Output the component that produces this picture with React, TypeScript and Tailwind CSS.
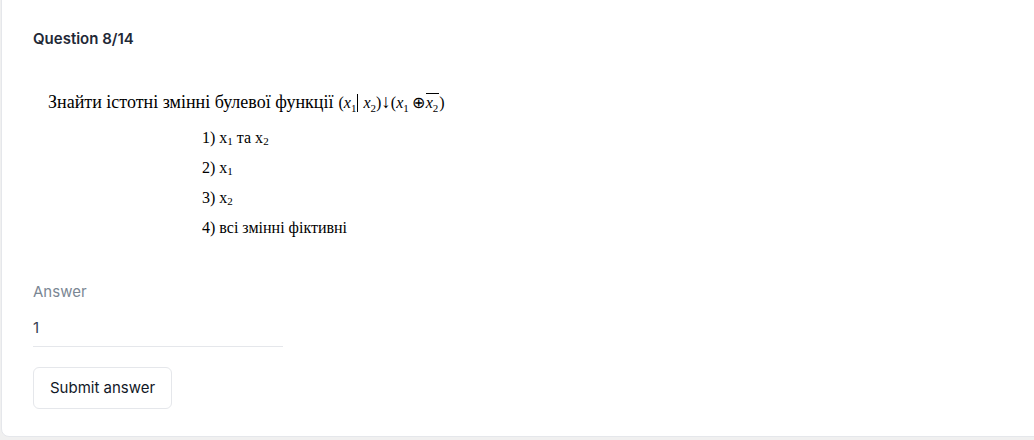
import React from "react";

const serif = "font-['Liberation_Serif','Times_New_Roman',serif]";

function Sub({ children }: { children: React.ReactNode }) {
  return <span className="relative top-[4px] text-[11px] not-italic">{children}</span>;
}

function Idx({ children }: { children: React.ReactNode }) {
  return <span className="relative top-[2px] text-[11px]">{children}</span>;
}

export default function App() {
  return (
    <div className="w-[1034px] h-[440px] overflow-hidden bg-[#f0f0f0] font-['Inter','Noto_Sans',sans-serif]">
      <div className="-mt-[10px] ml-px w-[1060px] h-[447px] rounded-lg border border-[#e5e7eb] bg-white pt-[38px] pl-[31px]">
        <h2 className="text-[15px] font-semibold text-[#1f2937] leading-5">Question 8/14</h2>

        <div className={`${serif} mt-[41px] pl-[15px] text-[18px] leading-6 text-black whitespace-nowrap`}>
          <span>Знайти істотні змінні булевої функції</span>
          <span className="ml-[5px] text-[16px]">
            (<i>x</i>
            <Sub>1</Sub>
            <span className="inline-block w-px h-[18px] bg-black ml-[1px] mr-[5px] align-[-4px]" />
            <i>x</i>
            <Sub>2</Sub>)<span className="font-bold text-[19px] leading-none">↓</span>(<i>x</i>
            <Sub>1</Sub>
            <span className="ml-[3px] mr-[1px]">⊕</span>
            <span className="inline-block border-t border-black leading-[17px] pr-px">
              <i>x</i>
              <Sub>2</Sub>
            </span>
            )
          </span>
        </div>

        <ul className={`${serif} mt-[12px] ml-[169px] text-[16px] text-black flex flex-col gap-[10px]`}>
          <li className="h-5 leading-5">
            1) x<Idx>1</Idx> та x<Idx>2</Idx>
          </li>
          <li className="h-5 leading-5">
            2) x<Idx>1</Idx>
          </li>
          <li className="h-5 leading-5">
            3) x<Idx>2</Idx>
          </li>
          <li className="h-5 leading-5">4) всі змінні фіктивні</li>
        </ul>

        <div className="mt-[44px] text-[15px] text-[#7b8794] leading-5">Answer</div>
        <div className="mt-[16px] w-[250px] border-b border-[#e5e7eb] pb-[8px] text-[15px] text-[#374151] leading-5">1</div>

        <button className="mt-[20px] h-[42px] px-[16px] rounded-md border border-[#e5e7eb] bg-white text-[15px] text-[#111827]">
          Submit answer
        </button>
      </div>
    </div>
  );
}
